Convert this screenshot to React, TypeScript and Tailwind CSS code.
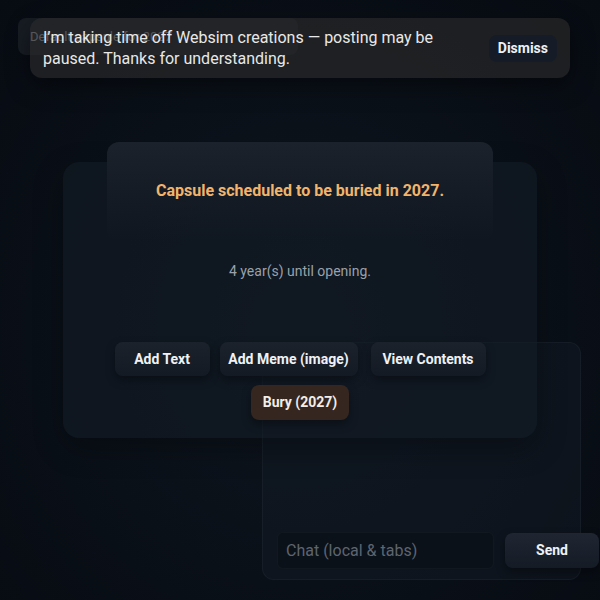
import React, { useState } from "react";

const btn =
  "h-[34px] whitespace-nowrap rounded-lg bg-gradient-to-b from-[#1b222c] to-[#141a23] text-[14px] font-bold text-[#eef1f5] shadow-[0_4px_10px_rgba(0,0,0,0.35)]";

const App = () => {
  const [notice, setNotice] = useState(true);
  const [chat, setChat] = useState("");

  return (
    <div
      className="relative h-[600px] w-[600px] overflow-hidden bg-[radial-gradient(ellipse_at_50%_55%,#0e151e_0%,#0a1018_55%,#070b12_100%)]"
      style={{ fontFamily: "Roboto, 'Noto Sans', sans-serif" }}
    >
      {/* default status pill behind the notice */}
      <div className="absolute left-[18px] top-[18px] flex h-[37px] w-[280px] items-center rounded-lg bg-[#171c23] pl-[12px] text-[13px] text-[#a3aab3]">
        Default capsule for 2027
      </div>

      {/* floating chat panel (sits under the card's buttons) */}
      <div className="absolute left-[262px] top-[342px] flex h-[238px] w-[319px] flex-col justify-end rounded-xl border border-white/[0.04] bg-[#121a24]/50 pb-[10px] pl-[14px]">
        <div className="flex items-center gap-[11px]">
          <input
            value={chat}
            onChange={(e) => setChat(e.target.value)}
            placeholder="Chat (local & tabs)"
            className="h-[37px] w-[217px] shrink-0 rounded-md border border-white/[0.03] bg-[#0b1119] px-[8px] text-[16px] text-[#d6dbe1] placeholder:text-[#5d6570] outline-none"
          />
          <button className="h-[35px] w-[94px] shrink-0 rounded-lg bg-gradient-to-b from-[#1f2632] to-[#151b25] text-[14px] font-bold text-[#eef1f5] shadow-[0_4px_10px_rgba(0,0,0,0.35)]">
            Send
          </button>
        </div>
      </div>

      {/* main card */}
      <div className="relative pt-[162px]">
        <div className="mx-auto flex w-[474px] flex-col items-center rounded-2xl bg-[#131b25]/60 pb-[18px] shadow-[0_10px_30px_rgba(0,0,0,0.3)]">
          <div className="relative -mt-[20px] flex h-[100px] w-[386px] items-start justify-center rounded-xl bg-gradient-to-b from-[#1c222b] via-[#161c25]/90 to-transparent pt-[37px]">
            <p className="text-[16px] font-bold text-[#f2b46b]">
              Capsule scheduled to be buried in 2027.
            </p>
          </div>
          <p className="mt-[19px] text-[14px] text-[#99a1ab]">
            4 year(s) until opening.
          </p>
          <div className="mt-[60px] flex gap-[10px]">
            <button className={btn + " w-[95px]"}>Add Text</button>
            <button className={btn + " w-[138px]"}>Add Meme (image)</button>
            <button className={btn + " ml-[3px] w-[115px]"}>View Contents</button>
          </div>
          <button className="mt-[9px] h-[35px] w-[98px] whitespace-nowrap rounded-lg bg-[#35261f] text-[14px] font-bold text-[#f3ede8] shadow-[0_4px_10px_rgba(0,0,0,0.35)]">
            Bury (2027)
          </button>
        </div>
      </div>

      {/* notice toast */}
      {notice && (
        <div className="absolute left-[30px] top-[18px] flex h-[60px] w-[540px] items-center justify-between rounded-xl bg-[#2a2a2a]/65 pl-[13px] pr-[13px] shadow-[0_8px_24px_rgba(0,0,0,0.4)]">
          <p className="w-[420px] text-[16px] leading-[21px] text-[#e8e8e8]">
            I’m taking time off Websim creations — posting may be paused. Thanks
            for understanding.
          </p>
          <button
            onClick={() => setNotice(false)}
            className="h-[27px] rounded-lg bg-[#151c27] px-[9px] text-[14px] font-bold text-[#eef1f5]"
          >
            Dismiss
          </button>
        </div>
      )}
    </div>
  );
};

export default App;
